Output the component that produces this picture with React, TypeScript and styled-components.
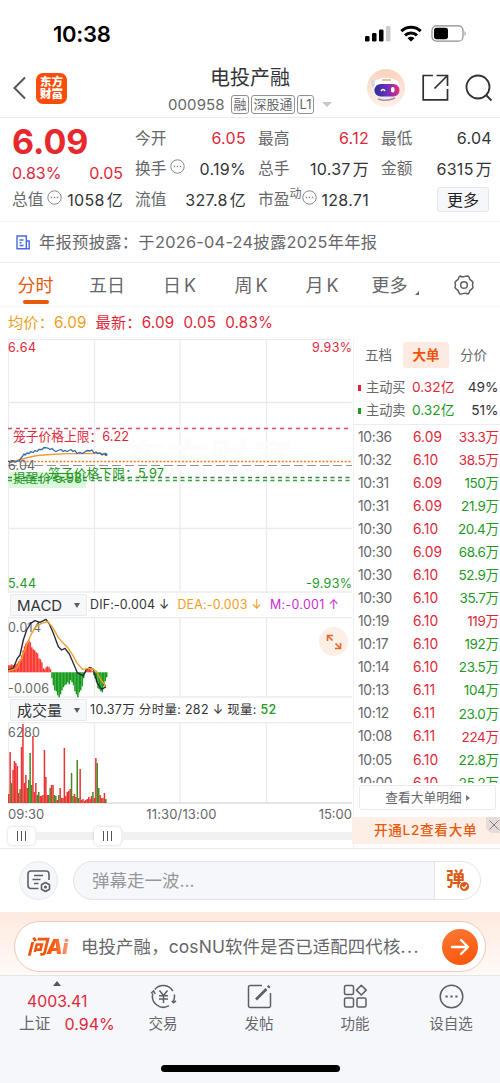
import React from "react";
import styled, { createGlobalStyle } from "styled-components";

const RED = "#e0273a";
const GREEN = "#22991f";
const ORANGE = "#e8590c";
const AMBER = "#ef9d1d";
const GREY = "#66676a";
const DARK = "#333438";

const Global = createGlobalStyle`
  * { box-sizing: border-box; }
  body { margin: 0; background: #fff; font-family: Inter, "Noto Sans CJK SC", sans-serif; color: ${GREY}; }
  svg { display: block; flex: none; }
  svg text { font-family: Inter, "Noto Sans CJK SC", sans-serif; }
`;

const Screen = styled.main`
  width: 500px;
  height: 1083px;
  overflow: hidden;
  display: flex;
  flex-direction: column;
  white-space: nowrap;
  line-height: 1;
`;

const Label = styled.span<{ $c?: string; $s?: number; $w?: number; $ls?: number }>`
  color: ${(p) => p.$c ?? GREY};
  font-size: ${(p) => p.$s ?? 16}px;
  font-weight: ${(p) => p.$w ?? 400};
  letter-spacing: ${(p) => p.$ls ?? 0}px;
`;

const StatusBar = styled.div`
  height: 66px;
  padding: 1px 33px 0 53px;
  display: flex;
  align-items: center;
  justify-content: space-between;
`;
const StatusIcons = styled.div`
  display: flex;
  align-items: center;
  gap: 9px;
`;

const Header = styled.header`
  height: 52px;
  display: flex;
  align-items: center;
  padding: 0 7px 8px 12px;
  border-bottom: 1px solid #ececee;
`;
const Logo = styled.div`
  width: 31px;
  height: 31px;
  margin: 1px 0 0 9px;
  border-radius: 7px;
  background: #fb4d09;
  color: #fff;
  display: flex;
  flex-direction: column;
  align-items: center;
  justify-content: center;
  font-size: 11.5px;
  line-height: 12.5px;
  font-weight: 900;
`;
const TitleBlock = styled.div`
  width: 164px;
  margin: 12px 0 0 101px;
  height: 52px;
  display: flex;
  flex-direction: column;
  align-items: center;
  gap: 7px;
`;
const CodeRow = styled.div`
  display: flex;
  align-items: center;
  gap: 2px;
`;
const Tag = styled.span`
  border: 1px solid #909194;
  border-radius: 3px;
  height: 19px;
  padding: 0 1.5px;
  font-size: 13px;
  line-height: 17px;
`;
const Caret = styled.span`
  margin-left: 6px;
  border: 5px solid transparent;
  border-top-color: #c5c6c8;
  border-bottom: 0;
`;
const HeaderActions = styled.div`
  margin-left: auto;
  display: flex;
  align-items: center;
  gap: 16px;
`;

const Quote = styled.section`
  height: 104px;
  padding: 5px 8px 0 12px;
  display: grid;
  grid-template-columns: repeat(4, 111px);
  column-gap: 12px;
  border-bottom: 1px solid #f3f3f5;
`;
const QuoteColumn = styled.div`
  display: flex;
  flex-direction: column;
`;
const QuoteRow = styled.div<{ $h?: number }>`
  height: ${(p) => p.$h ?? 30.8}px;
  display: flex;
  align-items: center;
  justify-content: space-between;
`;
const WithDots = styled.span`
  display: flex;
  align-items: center;
  gap: 4px;
  svg { margin-top: -5px; }
`;
const Unit = styled.span`
  margin-left: 2px;
`;
const Sup = styled.span`
  font-size: 12px;
  margin: -11px -3px 0 -4px;
`;
const MoreButton = styled.button`
  width: 52px;
  height: 25px;
  margin: 0 3px 0 auto;
  padding: 0;
  border: 1px solid #e6e7ea;
  border-radius: 3px;
  background: #f6f7fa;
  color: #222;
  font: 16px Inter, "Noto Sans CJK SC", sans-serif;
  line-height: 22px;
`;

const Notice = styled.div`
  height: 41px;
  padding: 0 16px;
  display: flex;
  align-items: center;
  gap: 9px;
  border-bottom: 1px solid #f0f0f2;
`;

const PeriodTabs = styled.nav`
  height: 44px;
  display: flex;
  border-bottom: 1px solid #f6f6f8;
`;
const PeriodTab = styled.div<{ $active?: boolean; $w: number }>`
  width: ${(p) => p.$w}px;
  display: flex;
  flex-direction: column;
  align-items: center;
  padding-top: 14px;
  gap: 5px;
  font-size: 18px;
  word-spacing: -2px;
  color: ${(p) => (p.$active ? ORANGE : GREY)};
`;
const Underline = styled.i`
  width: 26px;
  height: 4px;
  border-radius: 2px;
  background: ${ORANGE};
`;
const MoreTab = styled.div`
  display: flex;
  align-items: flex-end;
  gap: 7px;
`;
const Corner = styled.i`
  border: 2.5px solid ${GREY};
  border-top-color: transparent;
  border-left-color: transparent;
`;

const PriceInfo = styled.div`
  height: 32px;
  padding-left: 8px;
  display: flex;
  align-items: center;
  gap: 9px;
`;

const Body = styled.section`
  height: 510px;
  display: flex;
  border-bottom: 1px solid #ebebee;
`;
const Charts = styled.div`
  width: 344px;
  margin-left: 8px;
  display: flex;
  flex-direction: column;
`;
const IndicatorBar = styled.div`
  height: 24px;
  display: flex;
  align-items: center;
  gap: 8px;
`;
const Picker = styled.div`
  width: 77px;
  height: 22px;
  margin: 0 -5px 0 2px;
  padding: 0 6px;
  border: 1px solid #e9eaed;
  border-radius: 2px;
  background: #f7f8fa;
  display: flex;
  align-items: center;
  justify-content: space-between;
`;
const Down = styled.i`
  border: 3.5px solid transparent;
  border-top: 5px solid #5c5d60;
  border-bottom: 0;
`;
const MacdPane = styled.div`
  position: relative;
`;
const ExpandButton = styled.div`
  position: absolute;
  right: 4px;
  top: 10px;
  width: 29px;
  height: 29px;
  border-radius: 50%;
  background: #fdeee6;
  display: grid;
  place-items: center;
`;
const TimeAxis = styled.div`
  height: 21px;
  display: flex;
  align-items: center;
  justify-content: space-between;
`;
const Slider = styled.div`
  height: 22px;
  display: flex;
  align-items: center;
`;
const Track = styled.i<{ $w: number }>`
  width: ${(p) => p.$w}px;
  height: 8px;
  background: #f1f1f2;
`;
const Handle = styled.div`
  width: 27px;
  height: 18px;
  border-radius: 4px;
  background: #fff;
  box-shadow: 0 0 3px rgba(0, 0, 0, 0.2);
  display: flex;
  align-items: center;
  justify-content: center;
  gap: 3px;
  i { width: 1.2px; height: 10px; background: #555; }
`;

const Orders = styled.aside`
  flex: 1;
  margin-left: 1px;
  border-left: 1px solid #f0f0f2;
  display: flex;
  flex-direction: column;
`;
const OrderTabs = styled.div`
  height: 34px;
  padding: 3px 4px 5px 0;
  display: grid;
  grid-template-columns: 49px 46px 49px;
  text-align: center;
  font-size: 13.5px;
  line-height: 26px;
`;
const OrderTab = styled.span<{ $active?: boolean }>`
  border-radius: 3px;
  background: ${(p) => (p.$active ? "#fdebe1" : "transparent")};
  color: ${(p) => (p.$active ? "#f0530b" : GREY)};
  font-weight: ${(p) => (p.$active ? 600 : 400)};
`;
const Summary = styled.div`
  height: 52px;
  padding: 3px 0 3px 0;
  border-bottom: 1px solid #ededf0;
`;
const SummaryRow = styled.div<{ $c: string }>`
  height: 23px;
  padding-right: 3.5px;
  display: grid;
  grid-template-columns: 12px 46px 1fr auto;
  align-items: center;
  &::before {
    content: "";
    width: 2.5px;
    height: 6px;
    margin-left: 4px;
    background: ${(p) => p.$c};
  }
`;
const Trades = styled.div`
  height: 358px;
  padding-top: 1px;
  overflow: hidden;
`;
const Trade = styled.div`
  height: 23.07px;
  padding: 0 3.5px 0 4px;
  display: grid;
  grid-template-columns: 55px 36px 1fr;
  align-items: center;
  span:last-child { text-align: right; }
`;
const DetailButton = styled.div`
  width: 137px;
  height: 25px;
  margin: 2px 0 0 5px;
  padding-top: 1px;
  border: 1px solid #ebebee;
  border-radius: 3px;
  display: flex;
  align-items: center;
  justify-content: center;
  gap: 4px;
`;
const Right = styled.i`
  border: 3px solid transparent;
  border-left: 4px solid #77787b;
  border-right: 0;
`;
const Upgrade = styled.div`
  position: relative;
  height: 27px;
  margin: 7px 0 0 -2px;
  padding-left: 22px;
  background: #fdeee6;
  display: flex;
  align-items: center;
`;
const Close = styled.div`
  position: absolute;
  right: 0;
  top: 0;
  width: 16px;
  height: 16px;
  border-bottom-left-radius: 7px;
  background: #e5dcda;
  display: grid;
  place-items: center;
`;

const CommentBar = styled.section`
  height: 63px;
  padding: 0 19px 0 19px;
  display: flex;
  align-items: center;
  gap: 15px;
`;
const RoundButton = styled.div`
  width: 39px;
  height: 39px;
  border: 1px solid #e7e8ea;
  border-radius: 50%;
  background: #f6f7fa;
  display: grid;
  place-items: center;
`;
const CommentField = styled.div`
  flex: 1;
  height: 39px;
  border: 1px solid #e2e4e8;
  border-radius: 20px;
  background: #f6f7fa;
  display: flex;
  align-items: center;
  overflow: hidden;
  padding-left: 18px;
`;
const BulletToggle = styled.div`
  position: relative;
  width: 46px;
  height: 39px;
  margin-left: auto;
  padding: 9px 0 0 11px;
  border-left: 1px solid #e2e4e8;
  background: #fff;
  svg { position: absolute; left: 24px; top: 20px; }
`;

const AiArea = styled.section`
  height: 64px;
  padding: 9px 14px 0;
  background: linear-gradient(#fdeae0, #fffaf7);
  border-bottom: 1px solid #e5e5e8;
`;
const AiPill = styled.div`
  height: 51px;
  border: 1px solid #f6c8b2;
  border-radius: 26px;
  background: #fff;
  display: flex;
  align-items: center;
  padding: 0 7px 0 12px;
`;
const AiMark = styled.span`
  width: 54px;
  font-size: 20px;
  font-weight: 900;
  font-style: italic;
  letter-spacing: -0.3px;
  background: linear-gradient(90deg, #f04e06, #fb5b10 50%, #fca287 80%);
  background-clip: text;
  color: transparent;
`;
const Send = styled.div`
  width: 36px;
  height: 36px;
  margin-left: auto;
  border-radius: 50%;
  background: linear-gradient(160deg, #fb7a35, #fa5206);
  display: grid;
  place-items: center;
`;

const BottomNav = styled.nav`
  flex: 1;
  padding: 0 1px 0 19px;
  background: #f6f7fa;
  display: flex;
  flex-direction: column;
`;
const NavItems = styled.div`
  height: 89px;
  display: grid;
  grid-template-columns: repeat(5, 96px);
`;
const NavItem = styled.div`
  display: flex;
  flex-direction: column;
  align-items: center;
  padding-top: 7px;
  gap: 7px;
`;
const IndexItem = styled.div`
  padding-top: 5px;
`;
const Up = styled.i`
  display: block;
  width: 0;
  margin: 0 0 7px 34px;
  border: 4.5px solid transparent;
  border-bottom: 5px solid #55565a;
  border-top: 0;
`;
const IndexValue = styled.div`
  padding-left: 8px;
`;
const IndexRow = styled.div`
  display: flex;
  gap: 14px;
  margin-top: 6px;
`;
const HomeIndicator = styled.i`
  width: 179px;
  height: 7px;
  margin: 0 0 0 142px;
  border-radius: 4px;
  background: #000;
`;

const Dots = () => (
  <svg width="15" height="15" viewBox="0 0 15 15" fill="none" stroke="#85868a">
    <circle cx="7.5" cy="7.5" r="6.7" />
    <path d="M3.8 7.5h1.4M6.8 7.5h1.4M9.8 7.5h1.4" strokeWidth="1.4" />
  </svg>
);

const Robot = () => (
  <svg width="40" height="40" viewBox="0 0 40 40">
    <defs>
      <linearGradient id="halo" x2="0" y2="1"><stop stopColor="#fbd3bd" /><stop offset="1" stopColor="#fff0e8" /></linearGradient>
      <linearGradient id="visor"><stop stopColor="#2b2f90" /><stop offset=".5" stopColor="#6b30bd" /><stop offset="1" stopColor="#e72e75" /></linearGradient>
    </defs>
    <circle cx="20" cy="20" r="19" fill="url(#halo)" />
    <ellipse cx="20" cy="21" rx="15" ry="11.5" fill="#eeeaf0" />
    <ellipse cx="20" cy="17" rx="13" ry="7" fill="#fff" />
    <path d="M5 13l3-2 1 7-3 2z" fill="#d8d5e2" />
    <path d="M16 12h9" stroke="#f4bd96" strokeWidth="2" />
    <rect x="8.5" y="16" width="25" height="12.5" rx="6.2" fill="url(#visor)" />
    <path d="M15 23q2-3 4 0" fill="none" stroke="#fff" strokeWidth="1.5" />
    <rect x="25" y="19" width="3.5" height="5.5" rx="1.7" fill="#fff" />
    <path d="M12 31q8 3 17-1" stroke="#a1929b" strokeWidth="1.5" fill="none" />
  </svg>
);

const Grid = ({ h, lines = [] }: { h: number; lines?: number[] }) => (
  <g stroke="#ececee" strokeWidth="1.3">
    {[0.5, 86.5, 172, 258.5].map((x) => <path key={x} d={`M${x} 0V${h}`} />)}
    {lines.map((y) => <path key={y} d={`M0 ${y}H344`} />)}
  </g>
);

const PriceChart = () => (
  <svg width="344" height="254" viewBox="0 0 344 254" fontSize="12.5">
    <Grid h={254} lines={[0.5, 63.5, 189.5, 253]} />
    <text x="117" y="134" fontSize="40" fontWeight="700" fill="#fcfcfc" textLength="168">东方财富</text>
    <rect x="0" y="133" width="78" height="16" fill="#dcf8dc" />
    <g fill="none">
      <path d="M0 89.5H344" stroke="#cf5068" strokeWidth="1.4" strokeDasharray="4 4" />
      <path d="M0 122.5H344" stroke="#f57a1f" strokeWidth="1.6" strokeDasharray="2 1.7" />
      <path d="M0 126.5H344" stroke="#929396" strokeWidth="1.2" strokeDasharray="9 4" />
      <path d="M0 138.5H344" stroke="#36883e" strokeWidth="1.3" strokeDasharray="4 3.5" />
      <path d="M0 141.5H344" stroke="#36a23e" strokeWidth="1.3" strokeDasharray="4 3.5" />
      <path d="M1 122.5l8-1 9-2.5 11-2.5 14-1 17-.8 18 0 20-.3" stroke="#f09a38" strokeWidth="1.3" />
      <path d="M0 122l3 1.500 2-1.500 2 1 3-1 1 0 2-3 1-1 2-3 1 1 2-2 2 .5 2-2 2 1 2-2 2 1 2-2 3 0 2-2 4 .5 2 1.500 2-1 2 2 2 1 2-1 3-1 2 2 2-1 2 1 2-1 2-1 2 2 2-1 2 3 3-1 2 1 2-1 3-2 3 .5 2-1 2 3 2-1 2 1.500 2-.5 2 2 2-1 2-.5" stroke="#326bad" strokeWidth="1.3" />
      <circle cx="98" cy="115.500" r="1.500" fill="#326bad" />
    </g>
    <text x="0" y="12.5" fill={RED} textLength="28">6.64</text>
    <text x="304" y="12.5" fill={RED} textLength="40">9.93%</text>
    <text x="0" y="131" fill={GREY} textLength="27">6.04</text>
    <text x="5" y="101.5" fill={RED} fontSize="12.8" textLength="116">笼子价格上限：6.22</text>
    <text x="5" y="144" fill={GREEN} fontSize="12.5" textLength="69">提醒价 5.98</text>
    <text x="40" y="138.5" fill={GREEN} fontSize="12.8" textLength="116">笼子价格下限：5.97</text>
    <text x="0" y="248.5" fill={GREEN} textLength="28">5.44</text>
    <text x="298" y="248.5" fill={GREEN} textLength="46">-9.93%</text>
  </svg>
);

const macdHist = [
  -7, -7, -8, -7, -7, -8, -9, -11, -13, -17, -22, -26, -29, -31, -32, -30, -25, -23, -22, -20, -19, -14, -13,
  -10, -4, -3, -5, -6, -5, -3, 6, 13, 18, 19, 23, 25, 22, 18, 15, 13, 12, 10, 12, 8, 10, 13, 19, 22, 25, 20,
  18, 14, 6, 1, -2, -3, -4, -3, -1, 3, 6, 10, 16, 17, 19, 20, 14, 9, 5,
];

const MacdChart = () => (
  <svg width="344" height="81" viewBox="0 0 344 81" fontSize="12.5">
    <Grid h={81} lines={[0.5, 80]} />
    {macdHist.map((v, i) => (
      <rect key={i} x={i * 1.44} y={v < 0 ? 55.3 + v : 55.3} width="1.5" height={Math.abs(v)} fill={v < 0 ? "#fa3832" : "#159b1c"} />
    ))}
    <text x="0" y="14.5" fill={GREY} textLength="33">0.014</text>
    <text x="0" y="76" fill={GREY} textLength="41">-0.006</text>
    <g fill="none" strokeWidth="4" strokeLinejoin="round" transform="translate(-8 -27) scale(.33333)">
      <polyline points="25,240 40,235 52,205 60,195 70,150 80,120 92,100 105,92 120,97 138,88 148,102 160,130 175,170 185,180 195,175 208,192 220,220 232,248 250,258 258,240 270,232 280,238 292,280 305,298 318,290" stroke="#252735" />
      <polyline points="25,243 50,235 65,205 80,165 95,130 110,108 125,100 143,95 158,112 175,143 190,160 205,175 218,195 230,218 248,238 262,236 275,235 290,245 303,270 318,288" stroke={AMBER} />
    </g>
  </svg>
);

const volumeBars: [number, number, 0 | 1][] = [
  [0, 9, 0], [1.4, 51, 0], [2.8, 20, 1], [4.3, 33, 0], [5.7, 42, 0], [7.1, 40, 0], [8.6, 37, 0], [10, 10, 0],
  [11.4, 14, 1], [12.8, 56, 0], [14.2, 79, 0], [15.7, 20, 0], [17.1, 28, 0], [18.5, 15, 0], [20, 23, 1],
  [21.4, 50, 1], [22.8, 18, 1], [24.2, 67, 0], [25.6, 11, 0], [27.1, 20, 0], [28.5, 8, 1], [30, 11, 1],
  [31.4, 7, 0], [32.8, 7, 0], [34.2, 8, 0], [35.7, 53, 0], [37.1, 26, 0], [38.5, 8, 0], [40, 8, 1],
  [41.4, 15, 1], [42.8, 18, 0], [44.3, 18, 0], [45.7, 8, 1], [47.1, 7, 1], [48.5, 3, 0], [50, 8, 1],
  [51.4, 15, 0], [52.8, 5, 0], [54.2, 5, 0], [55.6, 55, 0], [57.1, 7, 0], [58.5, 11, 0], [60, 12, 0],
  [61.4, 14, 0], [62.8, 30, 1], [64.2, 7, 1], [65.7, 9, 0], [67.1, 6, 0], [68.5, 43, 1], [70, 5, 1],
  [71.4, 34, 0], [72.8, 3, 0], [74.2, 4, 0], [75.7, 2, 0], [77.1, 3, 0], [78.5, 4, 0], [80, 6, 0],
  [81.4, 4, 0], [82.8, 7, 0], [84.2, 11, 1], [85.7, 5, 0], [87.1, 45, 0], [88.5, 40, 1], [90, 15, 1],
  [91.4, 8, 0], [92.8, 5, 0], [94.2, 5, 0], [95.7, 10, 0], [97.1, 4, 1],
];

const VolumeChart = () => (
  <svg width="344" height="82" viewBox="0 0 344 82" fontSize="12.5">
    <Grid h={81} lines={[0.5]} />
    <path d="M0 81H344" stroke="#dcdce0" strokeWidth="1.3" />
    {volumeBars.map(([x, h, up]) => (
      <rect key={x} x={x} y={81 - h} width="1.5" height={h} fill={up ? "#438a22" : "#ed3232"} />
    ))}
    <text x="0" y="14.5" fill={GREY} textLength="32">6280</text>
  </svg>
);

const trades: [string, string, string, boolean][] = [
  ["10:36", "6.09", "33.3万", true],
  ["10:32", "6.10", "38.5万", true],
  ["10:31", "6.09", "150万", false],
  ["10:31", "6.09", "21.9万", false],
  ["10:30", "6.10", "20.4万", false],
  ["10:30", "6.09", "68.6万", false],
  ["10:30", "6.10", "52.9万", false],
  ["10:30", "6.10", "35.7万", false],
  ["10:19", "6.10", "119万", true],
  ["10:17", "6.10", "192万", false],
  ["10:14", "6.10", "23.5万", false],
  ["10:13", "6.11", "104万", false],
  ["10:12", "6.11", "23.0万", false],
  ["10:08", "6.11", "224万", true],
  ["10:05", "6.10", "22.8万", false],
  ["10:00", "6.10", "25.2万", false],
];

type StatProps = { name: string; value: string; unit?: string; c?: string; dots?: boolean };
const Stat = ({ name, value, unit, c = DARK, dots }: StatProps) => (
  <QuoteRow>
    <WithDots><Label $s={15.7}>{name}</Label>{dots && <Dots />}</WithDots>
    <Label $s={16} $c={c} $ls={0.3}>{value}{unit && <Unit>{unit}</Unit>}</Label>
  </QuoteRow>
);

const navIcons: [string, React.ReactNode][] = [
  ["交易", <g key="a"><path d="M4.8 6.5A11 11 0 0 1 22.8 8M24.3 11.500a11 11 0 0 1-1 7M19 22.700A11 11 0 0 1 2.800 10.500M1 10.200l2.600-2.200 1.600 3M21.800 18l1.700 1.800 2.500-2" /><path d="M9.500 7.500l4 5 4-5M9 12.700h9M9 16h9M13.500 12.700V20" /></g>],
  ["发帖", <g key="b"><path d="M16 2.500H4.300A1.800 1.800 0 0 0 2.500 4.300V22.700A1.800 1.800 0 0 0 4.300 24.500H22.700A1.800 1.800 0 0 0 24.500 22.700V10" /><path d="M10 16.500L20.500 6" strokeWidth="2.600" /><path d="M22 4.500l1.500-1.500" strokeWidth="3" /></g>],
  ["功能", <g key="c"><rect x="2.500" y="2.500" width="9" height="9" rx="1.500" /><rect x="2.500" y="15" width="9" height="9" rx="1.500" /><rect x="15" y="15" width="9" height="9" rx="1.500" /><path d="M19.300 2.200l4.900 4.900-4.900 4.900-4.900-4.900z" strokeLinejoin="round" /></g>],
  ["设自选", <g key="d"><circle cx="13.500" cy="13.500" r="11.300" /><path d="M7.500 13.500h2.200M12.400 13.500h2.200M17.300 13.500h2.200" strokeWidth="2" /></g>],
];

export default function App() {
  return (
    <Screen>
      <Global />
      <StatusBar>
        <Label $s={22} $w={600} $c="#000" $ls={-0.3}>10:38</Label>
        <StatusIcons>
          <svg width="26" height="17" viewBox="0 0 26 17">
            <rect y="11" width="4.500" height="5.500" rx="1.300" /><rect x="7" y="8" width="4.500" height="8.500" rx="1.300" />
            <rect x="14" y="4.500" width="4.500" height="12" rx="1.300" /><rect x="21" y="1" width="4.500" height="15.500" rx="1.300" fill="#ccc" />
          </svg>
          <svg width="22" height="17" viewBox="0 0 22 17" fill="none" stroke="#000" strokeWidth="3">
            <path d="M1.300 6.200a14 14 0 0 1 19.400 0M5 10.300a8.700 8.700 0 0 1 12 0" /><path d="M11 16.500l-3.500-3.300a5 5 0 0 1 7 0z" fill="#000" stroke="none" />
          </svg>
          <svg width="36" height="17" viewBox="0 0 36 17">
            <rect x="1" y=".8" width="31" height="15.400" rx="4.500" fill="none" stroke="#8c8c8c" strokeWidth="1.200" />
            <rect x="3" y="2.800" width="14" height="11.400" rx="2.600" /><path d="M33.500 6q2.500 2.500 0 5z" fill="#999" />
          </svg>
        </StatusIcons>
      </StatusBar>

      <Header>
        <svg width="15" height="24" viewBox="0 0 15 24" fill="none" stroke="#55565a" strokeWidth="2"><path d="M13 1.500L2.500 12 13 22.500" /></svg>
        <Logo><span>东方</span><span>财富</span></Logo>
        <TitleBlock>
          <Label $s={20} $c={DARK}>电投产融</Label>
          <CodeRow>
            <Label $s={15} $ls={0.1}>000958&nbsp;</Label>
            <Tag>融</Tag><Tag>深股通</Tag><Tag>L1</Tag><Caret />
          </CodeRow>
        </TitleBlock>
        <HeaderActions>
          <Robot />
          <svg width="27" height="27" viewBox="0 0 27 27" fill="none" stroke="#2f3033" strokeWidth="1.700"><path d="M11 1.500H1.200V25.800H25.500V15M14.500 1.500H25.500V12M25.500 1.500L12.500 14.500" /></svg>
          <svg width="28" height="28" viewBox="0 0 28 28" fill="none" stroke="#2f3033" strokeWidth="1.800"><circle cx="13" cy="13" r="11.500" /><path d="M21 21l5.500 5.500" /></svg>
        </HeaderActions>
      </Header>

      <Quote>
        <QuoteColumn>
          <QuoteRow $h={37}><Label $s={34} $w={700} $c="#e7292d">6.09</Label></QuoteRow>
          <QuoteRow $h={26}><Label $c={RED}>0.83%</Label><Label $c={RED}>0.05</Label></QuoteRow>
          <QuoteRow $h={28}>
            <WithDots><Label $s={15.7}>总值</Label><Dots /></WithDots>
            <Label $c={DARK} $ls={0.3}>1058<Unit>亿</Unit></Label>
          </QuoteRow>
        </QuoteColumn>
        <QuoteColumn>
          <Stat name="今开" value="6.05" c={RED} /><Stat name="换手" value="0.19%" dots /><Stat name="流值" value="327.8" unit="亿" />
        </QuoteColumn>
        <QuoteColumn>
          <Stat name="最高" value="6.12" c={RED} /><Stat name="总手" value="10.37" unit="万" />
          <QuoteRow>
            <WithDots><Label $s={15.7}>市盈</Label><Sup>动</Sup><Dots /></WithDots>
            <Label $c={DARK} $ls={0.3}>128.71</Label>
          </QuoteRow>
        </QuoteColumn>
        <QuoteColumn>
          <Stat name="最低" value="6.04" /><Stat name="金额" value="6315" unit="万" />
          <QuoteRow><MoreButton>更多</MoreButton></QuoteRow>
        </QuoteColumn>
      </Quote>

      <Notice>
        <svg width="14" height="15" viewBox="0 0 14 15" fill="none" stroke="#4769e8" strokeWidth="1.400"><path d="M10.300 13.800V1H1v12.800h12.200V6h-3M3.500 5h4M3.500 7.800h2M3.500 10.500h4" /></svg>
        <Label $s={16.3} $ls={0.28}>年报预披露：于2026-04-24披露2025年年报</Label>
      </Notice>

      <PeriodTabs>
        <PeriodTab $w={71} $active>分时<Underline /></PeriodTab>
        <PeriodTab $w={72}>五日</PeriodTab>
        <PeriodTab $w={73}>日 K</PeriodTab>
        <PeriodTab $w={70}>周 K</PeriodTab>
        <PeriodTab $w={72}>月 K</PeriodTab>
        <PeriodTab $w={74}><MoreTab>更多<Corner /></MoreTab></PeriodTab>
        <svg width="22" height="22" viewBox="0 0 22 22" fill="none" stroke="#5d5e61" strokeWidth="1.500" style={{ marginTop: 11, marginLeft: 21 }}>
          <path d="M7 2q2 1.200 4 0.600t4-.6l1.200 1.500q.2 2.300 2.400 3.200l1.400 1.800q-1 2.500 0 5l-1.400 1.800q-2.200 1-2.400 3.200L15 20q-2-1.200-4-.6t-4 .6l-1.200-1.500Q5.600 16.200 3.400 15.300L2 13.500q1-2.500 0-5l1.400-1.800Q5.600 5.700 5.800 3.500z" strokeLinejoin="round" /><circle cx="11" cy="11" r="3.300" />
        </svg>
      </PeriodTabs>

      <PriceInfo>
        <Label $s={15.2} $c={AMBER} $ls={0.15}>均价：6.09</Label>
        <Label $s={15.2} $c={RED} $ls={0.2}>最新：6.09</Label>
        <Label $s={15.2} $c={RED} $ls={0.2}>0.05</Label>
        <Label $s={15.2} $c={RED} $ls={0.2}>0.83%</Label>
      </PriceInfo>

      <Body>
        <Charts>
          <PriceChart />
          <IndicatorBar>
            <Picker><Label $s={15} $c={DARK}>MACD</Label><Down /></Picker>
            <Label $s={12.400} $c={DARK} $ls={0.2}>DIF:-0.004 ↓</Label>
            <Label $s={12.400} $c={AMBER} $ls={0.2}>DEA:-0.003 ↓</Label>
            <Label $s={12.400} $c="#cb2bd2" $ls={0.35}>M:-0.001 ↑</Label>
          </IndicatorBar>
          <MacdPane>
            <MacdChart />
            <ExpandButton>
              <svg width="16" height="16" viewBox="0 0 16 16" fill="none" stroke="#df6930" strokeWidth="1.600"><path d="M1.500 7V1.500H7M1.500 1.500l5 5M14.500 9v5.500H9M14.500 14.500l-5-5" /></svg>
            </ExpandButton>
          </MacdPane>
          <IndicatorBar>
            <Picker><Label $s={15} $c={DARK}>成交量</Label><Down /></Picker>
            <Label $s={12.500} $c={DARK} $ls={0.3}>10.37万 分时量: 282 ↓ 现量: <Label $s={12.500} $w={500} $c={GREEN} $ls={0.3}>52</Label></Label>
          </IndicatorBar>
          <VolumeChart />
          <TimeAxis><Label $s={13}>09:30</Label><Label $s={13} $ls={0.15}>11:30/13:00</Label><Label $s={13}>15:00</Label></TimeAxis>
          <Slider>
            <Handle><i /><i /><i /></Handle><Track $w={59} /><Handle><i /><i /><i /></Handle><Track $w={231} />
          </Slider>
        </Charts>
        <Orders>
          <OrderTabs><OrderTab>五档</OrderTab><OrderTab $active>大单</OrderTab><OrderTab>分价</OrderTab></OrderTabs>
          <Summary>
            <SummaryRow $c="#e8202d"><Label $s={13.200}>主动买</Label><Label $s={13.700} $c={RED}>0.32亿</Label><Label $s={13.700} $c={DARK}>49%</Label></SummaryRow>
            <SummaryRow $c={GREEN}><Label $s={13.200}>主动卖</Label><Label $s={13.700} $c={GREEN}>0.32亿</Label><Label $s={13.700} $c={DARK}>51%</Label></SummaryRow>
          </Summary>
          <Trades>
            {trades.map(([time, price, amount, buy], i) => (
              <Trade key={i}>
                <Label $s={13.800} $ls={-0.3}>{time}</Label>
                <Label $s={13.800} $c={RED} $ls={0}>{price}</Label>
                <Label $s={13.500} $c={buy ? RED : GREEN} $ls={-0.4}>{amount}</Label>
              </Trade>
            ))}
          </Trades>
          <DetailButton><Label $s={12.700} $ls={0.1}>查看大单明细</Label><Right /></DetailButton>
          <Upgrade>
            <Label $s={13.600} $w={500} $c={ORANGE} $ls={0.700}>开通L2查看大单</Label>
            <Close><svg width="10" height="10" viewBox="0 0 10 10" stroke="#88807e"><path d="M.5.5l9 9M9.500.5l-9 9" /></svg></Close>
          </Upgrade>
        </Orders>
      </Body>

      <CommentBar>
        <RoundButton>
          <svg width="26" height="24" viewBox="0 0 26 24" fill="none" stroke="#5e5f63" strokeWidth="1.600">
            <path d="M12.500 19.500H5a3 3 0 0 1-3-3V5a3 3 0 0 1 3-3h15a3 3 0 0 1 3 3v6M8 6.500h9M6.500 10.500h8M8 14.500h4.500" />
            <path d="M19.500 13.500l4 2.300v4.400l-4 2.300-4-2.300v-4.400z" strokeLinejoin="round" /><circle cx="19.500" cy="18" r=".8" />
          </svg>
        </RoundButton>
        <CommentField>
          <Label $s={17.500} $c="#96979b">弹幕走一波...</Label>
          <BulletToggle>
            <Label $s={19} $w={700} $c="#dc5a16">弹</Label>
            <svg width="11" height="11" viewBox="0 0 11 11"><circle cx="5.500" cy="5.500" r="5" fill="#dc5a16" stroke="#fff" /><path d="M3 5.500l2 2 3-3.700" stroke="#fff" fill="none" strokeWidth="1.200" /></svg>
          </BulletToggle>
        </CommentField>
      </CommentBar>

      <AiArea>
        <AiPill>
          <AiMark>问Ai</AiMark>
          <Label $s={17.400} $ls={0.15}>电投产融，cosNU软件是否已适配四代核<Label $s={17.400} $ls={1.500}>...</Label></Label>
          <Send><svg width="20" height="18" viewBox="0 0 20 18" fill="none" stroke="#fff" strokeWidth="2.400" strokeLinecap="round" strokeLinejoin="round"><path d="M2 9h16M11 2l7 7-7 7" /></svg></Send>
        </AiPill>
      </AiArea>

      <BottomNav>
        <NavItems>
          <IndexItem>
            <Up />
            <IndexValue><Label $s={15.800} $c={RED}>4003.41</Label></IndexValue>
            <IndexRow><Label $s={15.800}>上证</Label><Label $s={16} $c={RED}>0.94%</Label></IndexRow>
          </IndexItem>
          {navIcons.map(([name, icon]) => (
            <NavItem key={name}>
              <svg width="27" height="27" viewBox="0 0 27 27" fill="none" stroke="#5e5f63" strokeWidth="1.500">{icon}</svg>
              <Label $s={14.500}>{name}</Label>
            </NavItem>
          ))}
        </NavItems>
        <HomeIndicator />
      </BottomNav>
    </Screen>
  );
}
